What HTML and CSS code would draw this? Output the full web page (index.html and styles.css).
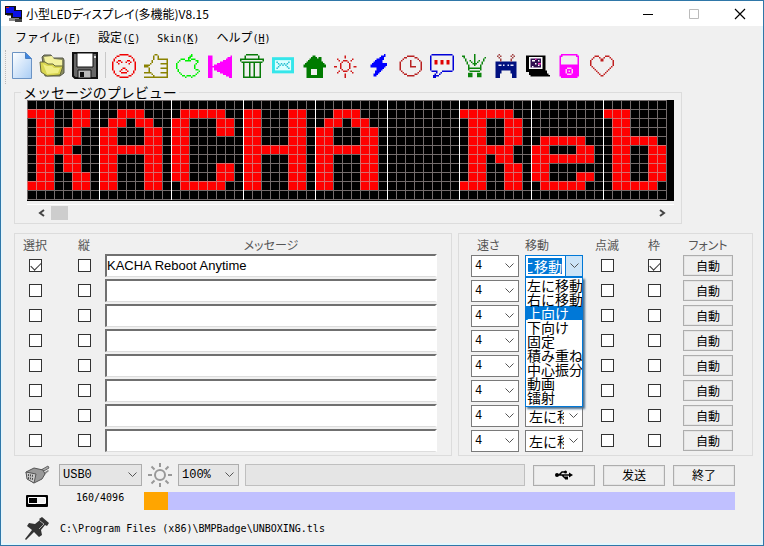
FILE: index.html
```html
<!DOCTYPE html>
<html lang="ja">
<head>
<meta charset="utf-8">
<title>小型LEDディスプレイ(多機能)V8.15</title>
<link rel="stylesheet" href="styles.css">
</head>
<body>
<div class="window">
  <header class="titlebar">
    <svg class="app-icon" width="17" height="17" viewBox="0 0 17 17"><path fill="#111" d="M0 1h11v9H0zM6 5h11v9H6z"/><path fill="#0a10e8" d="M1 2h8v6H1zM8 6h8v6H8z"/><path fill="#d22" d="M1 2h3v1H1z"/><path fill="#888" d="M2 10h4v1H2zM4 13h10v3H4z"/><path fill="#444" d="M10 14h7v3h-7z"/></svg>
    <h1>小型LEDディスプレイ(多機能)V8.15</h1>
    <div class="window-buttons">
      <button type="button" aria-label="最小化"><svg width="12" height="12"><path d="M1 6.5h10" stroke="#000"/></svg></button>
      <button type="button" aria-label="最大化" disabled><svg width="12" height="12"><path d="M1.5 1.500h9v9h-9z" fill="none" stroke="#bbb"/></svg></button>
      <button type="button" aria-label="閉じる"><svg width="12" height="12"><path d="M1 1l10 10M11 1L1 11" stroke="#000" stroke-width="1.200"/></svg></button>
    </div>
  </header>

  <nav class="menu">
    <a href="#">ファイル<span class="half">(<u>F</u>)</span></a>
    <a href="#">設定<span class="half">(<u>C</u>)</span></a>
    <a href="#"><span class="half">Skin(<u>K</u>)</span></a>
    <a href="#">ヘルプ<span class="half">(<u>H</u>)</span></a>
  </nav>

  <div class="toolbar">
    <div class="tools files">
      <button type="button" aria-label="新規"><svg width="20" height="28" viewBox="0 0 20 28"><defs><linearGradient id="sheet" x1="0" y1="0" x2="1" y2="1"><stop offset="0" stop-color="#fff"/><stop offset="1" stop-color="#a9cdf5"/></linearGradient></defs><path d="M.5.5h13l6 6v20H.5z" fill="url(#sheet)" stroke="#6b93c4"/><path d="M13.500.5v6h6" fill="#3f86e0" stroke="#4a7fc0"/></svg></button>
      <button type="button" aria-label="開く"><svg width="26" height="28" viewBox="0 0 26 28"><path d="M3 5l2-2h7l2 3h10l1 2v13l-4 3H6z" fill="#8a8c60" stroke="#55564a"/><path d="M5 5l8-1 2 3 8 1v11H8z" fill="#f4f2a0"/><path d="M1 10h5l3 2h5l2 2h8l-3 9-13 1-6-4z" fill="#d8d550" stroke="#66683a"/><path d="M4 12l4 2h5l2 2h6l-2 5-11 1z" fill="#f0ee85"/></svg></button>
      <button type="button" aria-label="保存"><svg width="26" height="28" viewBox="0 0 26 28"><path d="M1 1h24v25H3l-2-2z" fill="#666" stroke="#111" stroke-width="2"/><path d="M5 1h16v14H5z" fill="#fff" stroke="#111"/><path d="M6 18h13v8H6z" fill="#bbb" stroke="#111"/><path d="M8 20h4v5H8z" fill="#111"/><path d="M22 4h2v2h-2z" fill="#ddd"/></svg></button>
    </div>
    <div class="tools stamps">
      <button type="button" aria-label="顔"><svg width="24" height="24" viewBox="0 0 16 16" stroke="#f00000"><path d="M5 .5h6M3 1.500h2m6 0h2M2 2.500h1m10 0h1M1 3.500h1m12 0h1M1 4.500h1m12 0h1M0 5.500h1m14 0h1M0 6.500h1m14 0h1M0 7.500h1m14 0h1M0 8.500h1m14 0h1M0 9.500h1m14 0h1M0 10.500h1m14 0h1M1 11.500h1m12 0h1M1 12.500h1m12 0h1M2 13.500h1m10 0h1M3 14.500h2m6 0h2M5 15.500h6M4 4.500h2m4 0h2M3 5.500h1m2 0h1m2 0h1m2 0h1M4 6.500h1m6 0h1M7 9.500h2M6 10.500h1m2 0h1M5 11.500h1m4 0h1M6 12.500h4"/></svg></button>
      <button type="button" aria-label="いいね"><svg width="24" height="24" viewBox="0 0 16 16" stroke="#8a8200"><path d="M7 .5h2M6 1.500h1m2 0h1M6 2.500h1m2 0h1M6 3.500h1m2 0h7M5 4.500h1m9 0h1M5 5.500h1m9 0h1M4 6.500h1m6 0h5M0 7.500h4m11 0h1M0 8.500h3m12 0h1M3 9.500h1m7 0h5M3 10.500h1m11 0h1M3 11.500h1m11 0h1M0 12.500h5m6 0h5M5 13.500h1m9 0h1M6 14.500h1m8 0h1M0 15.500h16"/></svg></button>
      <button type="button" aria-label="りんご"><svg width="24" height="24" viewBox="0 0 16 16" stroke="#00f000"><path d="M10 .5h1M9 1.500h2M8 2.500h2M3 3.500h3m2 0h1m1 0h3M2 4.500h1m3 0h4m3 0h2M1 5.500h1m12 0h1M0 6.500h1m12 0h1M0 7.500h1m11 0h1M0 8.500h1m11 0h1M0 9.500h1m11 0h1M1 10.500h1m11 0h2M1 11.500h1m13 0h1M2 12.500h1m11 0h1M3 13.500h1m9 0h1M4 14.500h2m1 0h3m1 0h2M6 15.500h1m3 0h1"/></svg></button>
      <button type="button" aria-label="先頭へ"><svg width="24" height="24" viewBox="0 0 16 16" fill="#f0f"><path d="M0 1h3v15H0zM16 1v15h-2v-1h-2v-1h-2v-1H8v-1H6v-1H4V9H3V8h1V7h2V6h2V5h2V4h2V3h1V2h2V1z"/></svg></button>
      <button type="button" aria-label="ごみ箱"><svg width="24" height="24" viewBox="0 0 16 16" stroke="#087a08"><path d="M4 .5h8M3 1.500h1m8 0h1M3 2.500h1m8 0h1M0 3.500h16M0 4.500h1m14 0h1M1 5.500h14M2 15.500h12M2.500 5v10M6.500 6v9M9.500 6v9M13.500 5v10"/></svg></button>
      <button type="button" aria-label="メール"><svg width="22" height="24" viewBox="0 0 15 16"><path d="M0 2h15v11H0z" fill="#35e6ea"/><path d="M2 4h11v7H2z" fill="#dff"/><path d="M3 5.500h1m7 0h1M4 6.500h1m1 0h1m1 0h1m1 0h1M5 7.500h1m1 0h1m1 0h1M4 8.500h1m5 0h1M3 9.500h1m7 0h1" stroke="#25bfd0"/></svg></button>
      <button type="button" aria-label="ホーム"><svg width="24" height="24" viewBox="0 0 16 16" fill="#007b00"><path d="M7 1h2v1h1v1h1V2h2v3h1v1h1v1h1v2h-2v7H3V9H1V7h1V6h1V5h1V4h1V3h1V2h1z"/><path d="M6 10h4v4H6z" fill="#f0f0f0"/></svg></button>
      <button type="button" aria-label="太陽"><svg width="24" height="24" viewBox="0 0 16 16" stroke="#d01818"><path d="M7.500 1v2M2 3.500h1m9 0h1M3 4.500h1m2 0h3m2 0h1M5 5.500h1m3 0h1M4 6.500h1m5 0h1M4 7.500h1m5 0h1M0 8.500h2m2 0h1m5 0h1m2 0h2M4 9.500h1m5 0h1M5 10.500h1m3 0h1M3 11.500h1m2 0h3m2 0h1M2 12.500h1m9 0h1M7.500 13v3"/></svg></button>
      <button type="button" aria-label="稲妻"><svg width="24" height="24" viewBox="0 0 16 16" fill="#00f"><path d="M13 0v2h-1v2h-1v2h3v2h-1v1h-1v1h-1v1h-1v1H9v1H8v1H7v1H5v-2h1v-2h1V9H3V7h1V6h1V5h1V4h1V3h2V2h1V1h2V0z"/></svg></button>
      <button type="button" aria-label="時計"><svg width="24" height="24" viewBox="0 0 16 16" stroke="#b82020"><path d="M6 1.500h5M4 2.500h2m5 0h2M3 3.500h1m9 0h1M2 4.500h1m11 0h1M1 5.500h1m13 0h1M1 6.500h1m13 0h1M1 7.500h1m13 0h1M1 8.500h1m13 0h1M1 9.500h1m13 0h1M1 10.500h1m13 0h1M2 11.500h1m11 0h1M3 12.500h1m9 0h1M4 13.500h2m5 0h2M6 14.500h5M8.500 4v5M9 8.500h3"/></svg></button>
      <button type="button" aria-label="吹き出し"><svg width="24" height="24" viewBox="0 0 16 16" stroke="#0000d8"><path d="M1 .5h14M1 11.500h4m3 0h7M.5 1v10M15.500 1v10M4 12.500h1m2 0h1M3 13.500h1m2 0h1M2 14.500h4M2 15.500h2"/><path d="M3 4h2v3H3zM7 4h2v3H7zM11 4h2v3h-2z" fill="#e00000" stroke="none"/></svg></button>
      <button type="button" aria-label="カート"><svg width="24" height="24" viewBox="0 0 16 16" stroke="#0c840c"><path d="M8 .5h1M0 1.500h2M8 1.500h1M1 2.500h1m6 0h1m6 0h1M2 3.500h1m5 0h1m5 0h1M2 4.500h1m2 0h1m2 0h1m2 0h1m2 0h1M3 5.500h1m2 0h1m1 0h1m1 0h1m2 0h1M3 6.500h1m3 0h3m3 0h1M4 7.500h1m3 0h1m3 0h1M4 8.500h1m7 0h1M4 9.500h9M4 10.500h1m7 0h1M5 11.500h7"/><path d="M4 14h3m3 0h3" stroke-width="3"/></svg></button>
      <button type="button" aria-label="城"><svg width="24" height="24" viewBox="0 0 16 16"><path d="M1 5h14v11h-3v-3h-1v-2H5v2H4v3H1z" fill="#001080"/><path d="M3 7.500h2m1 0h1m2 0h1m1 0h2" stroke="#e8e8ff"/><path d="M3 .5h1m8 0h1M2 1.500h1m1 0h1m6 0h1m1 0h1M3 2.500h1m8 0h1M4 3.500h1m6 0h1M4 4.500h1m6 0h1" stroke="#a04040"/></svg></button>
      <button type="button" aria-label="パソコン"><svg width="24" height="24" viewBox="0 0 16 16"><path d="M0 1h13v10h1v2h1v1h1v1H3v-1H2v-2H0z"/><path d="M2 2h9v8H2z" fill="#fff"/><path d="M3 3h7v6H3z" fill="#301050"/><path d="M4 4.500h2m2 0h1M6 6.500h1M4 8.500h1m3-1h1" stroke="#fff"/><path d="M6 3.500h1M8 6.500h2" stroke="#e3b"/></svg></button>
      <button type="button" aria-label="プレーヤー"><svg width="24" height="24" viewBox="0 0 16 16"><path d="M2 0h11v1h1v14h-1v1H2v-1H1V1h1z" fill="#f0f"/><path d="M3 1h9v1h1v5H2V2h1z" fill="#f0f0f0"/><path d="M6 9.500h3M5 10.500h1m3 0h1M5 11.500h1m1 0h1m1 0h1M5 12.500h1m3 0h1M6 13.500h3" stroke="#fce"/></svg></button>
      <button type="button" aria-label="ハート"><svg width="24" height="24" viewBox="0 0 16 16" stroke="#c02020"><path d="M3 1.500h3m4 0h3M2 2.500h1m3 0h1m2 0h1m3 0h1M1 3.500h1m5 0h2m5 0h1M0 4.500h1m6 0h2m6 0h1M0 5.500h1m14 0h1M0 6.500h1m14 0h1M0 7.500h1m14 0h1M1 8.500h1m12 0h1M2 9.500h1m10 0h1M3 10.500h1m8 0h1M4 11.500h1m6 0h1M5 12.500h1m4 0h1M6 13.500h1m2 0h1M7 14.500h2"/></svg></button>
    </div>
  </div>

  <main>
    <fieldset class="preview">
      <legend>メッセージのプレビュー</legend>
      <svg class="led" viewBox="0 0 647 101" role="img" aria-label="KACHA Reb">
        <defs>
          <pattern id="cell" width="9" height="9" patternUnits="userSpaceOnUse"><path d="M0 .5h9M.5 0v9" stroke="#c0b4b4" stroke-opacity=".6"/></pattern>
          <pattern id="block" width="72" height="9" patternUnits="userSpaceOnUse"><path d="M.5 0v9" stroke="#fff"/></pattern>
          <path id="led-a" d="M2 1.500h3M1 2.500h2m1 0h2M0 3.500h2m3 0h2M0 4.500h2m3 0h2M0 5.500h7M0 6.500h2m3 0h2M0 7.500h2m3 0h2M0 8.500h2m3 0h2M0 9.500h2m3 0h2"/>
        </defs>
        <rect width="647" height="101"/>
        <g transform="scale(9)" stroke="#f00">
          <path d="M0 1.500h3m2 0h2M1 2.500h2m2 0h2M1 3.500h2m1 0h2M1 4.500h2m1 0h2M1 5.500h4M1 6.500h2m1 0h2M1 7.500h2m1 0h2M1 8.500h2m2 0h2M0 9.500h3m2 0h2"/>
          <use href="#led-a" x="8"/>
          <path d="M17 1.500h5M16 2.500h2m3 0h2M16 3.500h2m3 0h2M16 4.500h2M16 5.500h2M16 6.500h2M16 7.500h2m3 0h2M16 8.500h2m3 0h2M17 9.500h5"/>
          <path d="M25 1v9M30 1v9" stroke-width="2"/><path d="M26 5.500h3"/>
          <use href="#led-a" x="32"/>
          <path d="M48 1.500h6M49 2.500h2m2 0h2M49 3.500h2m2 0h2M49 4.500h2m2 0h2M49 5.500h5M49 6.500h2m1 0h2M49 7.500h2m2 0h2M49 8.500h2m2 0h2M48 9.500h3m2 0h2"/>
          <path d="M57 4.500h5M56 5.500h2m3 0h2M56 6.500h7M56 7.500h2M56 8.500h2m3 0h2M57 9.500h5"/>
          <path d="M64 1.500h3M65 2.500h2M65 3.500h2M65 4.500h5M65 5.500h2m2 0h2M65 6.500h2m2 0h2M65 7.500h2m2 0h2M65 8.500h2m2 0h2M65 9.500h5"/>
        </g>
        <rect width="640" height="100" fill="url(#cell)"/>
        <rect x="1" width="639" height="100" fill="url(#block)"/>
      </svg>
      <div class="scrollbar">
        <button type="button" aria-label="左へ"><svg width="8" height="8"><path d="M6 1L2 4l4 3" fill="none" stroke="#444" stroke-width="2"/></svg></button>
        <div class="thumb"></div>
        <button type="button" class="forward" aria-label="右へ"><svg width="8" height="8"><path d="M2 1l4 3-4 3" fill="none" stroke="#444" stroke-width="2"/></svg></button>
      </div>
    </fieldset>

    <div class="panels">
      <section class="panel messages" id="messages">
        <div class="row head"><span class="pick">選択</span><span class="pick tall">縦</span><span class="text">メッセージ</span></div>
      </section>
      <section class="panel effects" id="effects">
        <div class="row head"><span class="speed">速さ</span><span class="move">移動</span><span>点滅</span><span>枠</span><span>フォント</span></div>
      </section>
    </div>
  </main>

  <footer>
    <div class="controls">
      <svg class="glyph" width="26" height="22" viewBox="0 0 26 22"><path d="M17 6l7-4 1 2-7 4z" fill="#aaa" stroke="#666"/><path d="M18 10l6-4 1 1-6 5z" fill="#888"/><path d="M2 8l8-4 9 2 2 4-3 5-8 4-6-4z" fill="#999" stroke="#555"/><path d="M2 8l10 2-2 9-7-4z" fill="#ccc" stroke="#555"/><path d="M4 11l6 1M4 14l5 1" stroke="#444" stroke-dasharray="1 1" stroke-width="2"/></svg>
      <select class="box port" aria-label="ポート"><option>USB0</option></select>
      <svg class="glyph" width="24" height="24" viewBox="0 0 24 24" fill="none" stroke="#999" stroke-width="2"><circle cx="12" cy="12" r="5"/><path d="M12 0v4M12 20v4M0 12h4M20 12h4M3.500 3.500l3 3M17.500 17.500l3 3M3.500 20.500l3-3M17.500 6.500l3-3"/></svg>
      <select class="box bright" aria-label="明るさ"><option>100%</option></select>
      <input class="status" type="text" aria-label="状態" disabled>
      <div class="actions">
        <button type="button" class="push" aria-label="USB"><svg width="18" height="10" viewBox="0 0 18 10"><path d="M2 5h13M4 5l3-3h3M7 5l3 3h2" fill="none" stroke="#000" stroke-width="1.500"/><circle cx="2" cy="5" r="2"/><circle cx="10.500" cy="2" r="1.500"/><path d="M10 6.500h3v3h-3zM14 2.500L18 5l-4 2.500z"/></svg></button>
        <button type="button" class="push">发送</button>
        <button type="button" class="push">終了</button>
      </div>
    </div>
    <div class="usage">
      <svg class="glyph" width="26" height="14" viewBox="0 0 26 14"><rect x="2" y="1" width="22" height="12" rx="1"/><path d="M4.500 3.500h17v6h-17z" fill="none" stroke="#fff"/><path d="M13 4h8v5h-8z" fill="#f0f0f0"/></svg>
      <span class="half count">160/4096</span>
      <div class="meter"><div class="used" style="width:4%"></div></div>
    </div>
    <div class="path">
      <svg class="glyph" width="26" height="26" viewBox="0 0 26 26"><path d="M15 3l3-2 7 6-2 3-2-1-4 5 1 5-3 2-5-5-8 8-1-1 7-9-5-4 2-3 6 1 5-4z" fill="#333"/><path d="M16 5l4 3-5 5" fill="none" stroke="#aaa"/></svg>
      <span class="half">C:\Program Files (x86)\BMPBadge\UNBOXING.tls</span>
    </div>
  </footer>
</div>
<script src="app.js"></script>
</body>
</html>
```

FILE: styles.css
```css
* { box-sizing: border-box; }

body {
  margin: 0;
  font: 12px/16px "Noto Sans CJK JP", sans-serif;
  color: #000;
  background: #f0f0f0;
}

button, input, select { font: inherit; color: inherit; margin: 0; padding: 0; border-radius: 0; }

.window {
  min-height: 100vh;
  background: #f0f0f0;
  border: 1px solid #2f77a8;
  box-shadow: inset 0 -2px #e2f7fd, inset 2px 0 #e6f4fa, inset -2px 0 #e6f4fa;
}

.half { font: 10px/16px "DejaVu Sans Mono", monospace; }

.titlebar { display: flex; align-items: center; height: 25px; padding-left: 4px; background: #fff; }
.titlebar h1 { margin: 0 0 0 4px; font-size: 12px; font-weight: 400; font-feature-settings: "palt"; white-space: nowrap; }
.window-buttons { display: flex; margin-left: auto; }
.window-buttons button { width: 46px; height: 24px; border: 0; background: none; display: grid; place-items: center; }

.menu { display: flex; gap: 17px; height: 24px; align-items: center; padding-left: 14px; }
.menu a { color: inherit; text-decoration: none; white-space: nowrap; }

.toolbar { display: flex; height: 34px; margin-left: 4px; padding: 2px 0 0 6px; border-left: 1px dotted #bbb; }
.tools { display: flex; align-items: flex-start; gap: 8px; }
.tools button { border: 0; background: none; display: block; }
.tools svg { display: block; }
.files { gap: 7px; padding-right: 7px; }
.stamps { height: 26px; padding: 2px 0 0 6px; border-left: 1px solid #c8c8c8; }

main { padding: 0 10px 0 13px; }

.preview { margin: 0 71px 0 0; padding: 0 7px 2px 12px; border: 1px solid #dcdcdc; min-width: 0; }
.preview legend { padding: 0 2px; margin-left: -6px; font-size: 14px; line-height: 16px; }
.led { display: block; width: 100%; shape-rendering: crispEdges; }
.scrollbar { display: flex; align-items: center; height: 17px; margin-top: 3px; border-top: 1px solid #fff; padding: 0 5px 0 8px; }
.scrollbar button { display: grid; place-items: center; width: 14px; height: 14px; border: 0; background: none; }
.thumb { width: 17px; height: 14px; background: #cdcdcd; margin-left: 2px; }
.forward { margin-left: auto; }

.panels { display: flex; gap: 6px; margin-top: 9px; }
.panel { border: 1px solid #dcdcdc; padding-bottom: 2px; }
.messages { flex: 1; padding-left: 7px; padding-right: 14px; }
.effects { padding-left: 12px; padding-right: 19px; }

.row { display: flex; align-items: center; height: 25px; }
.head { height: 19px; padding-top: 2px; color: #555; font-feature-settings: "palt"; }
.pick { width: 26px; margin-right: 23px; display: grid; justify-items: center; }
.tall { margin-right: 8px; }
.messages .text { flex: 1; min-width: 0; text-align: center; }

.messages input[type="text"] {
  height: 23px;
  padding: 0 0 1px 0;
  border: 2px solid #fff;
  border-top-color: #707070;
  border-left-color: #707070;
  border-bottom: 1px solid #ddd;
  background: #fff;
  text-align: left;
  font: 13px/18px "Liberation Sans", sans-serif;
}

.effects .row { display: grid; grid-template-columns: 48px 58px 36px 46px 50px; column-gap: 6px; justify-items: center; }
.effects .head .speed, .effects .head .move { justify-self: start; }
.effects .head .speed { padding-left: 6px; }

input[type="checkbox"] { appearance: none; display: block; width: 13px; height: 13px; border: 1px solid #333; background: #fff; }
input[type="checkbox"]:checked::before {
  content: "";
  display: block;
  width: 9px;
  height: 5px;
  margin: 2px 0 0 1px;
  border-left: 1px solid #333;
  border-bottom: 1px solid #333;
  transform: rotate(-45deg);
}

select {
  appearance: none;
  width: 100%;
  height: 22px;
  padding: 0 18px 0 3px;
  border: 1px solid #7a7a7a;
  background: #fff url("data:image/svg+xml,%3Csvg xmlns='http://www.w3.org/2000/svg' width='9' height='6'%3E%3Cpath d='M.5 .5l4 4 4-4' fill='none' stroke='%23555'/%3E%3C/svg%3E") no-repeat right 4px center;
}
select.value-speed { font: 12px/18px "Liberation Mono", monospace; }
select.value-move { font-size: 14px; line-height: 18px; text-overflow: clip; }

.combo { position: relative; display: flex; width: 100%; height: 22px; padding: 2px 0 2px 2px; border: 1px solid #0078d7; background: #fff; }
.combo input { flex: 1; min-width: 0; height: 16px; margin-right: 3px; border: 0; background: #0078d7; color: #fff; font-size: 14px; line-height: 16px; direction: rtl; }
.combo button { width: 17px; margin: -2px 0; border: 0; border-left: 1px solid #0078d7; background: #cce4f7; display: grid; place-items: center; }
.list {
  position: absolute;
  z-index: 1;
  top: 21px;
  left: -1px;
  width: 58px;
  margin: 0;
  padding: 0 0 2px;
  list-style: none;
  overflow: hidden;
  border: 1px solid #0078d7;
  background: #fff;
  box-shadow: 2px 2px 2px #4a6f8f;
  font-size: 14px;
  line-height: 14px;
  white-space: nowrap;
}
.list li { padding-left: 1px; }
.list .current { background: #0078d7; color: #fff; }

.push { height: 21px; border: 1px solid #adadad; background: #efefef; line-height: 16px; display: grid; place-items: center; box-shadow: inset 0 0 0 1px #e4e4e4; }
.effects .push { width: 50px; }

footer { padding: 8px 28px 0 23px; }
footer .glyph { flex: none; }
.controls { display: flex; align-items: center; gap: 6px; height: 22px; }
.box { flex: none; background-color: #e5e5e5; border-color: #adadad; font: 12px/18px "Liberation Mono", monospace; }
.controls .port { width: 83px; margin-left: 3px; }
.controls .bright { width: 61px; }
.status { flex: 1; min-width: 0; height: 22px; border: 1px solid #bfbfbf; background: #e5e5e5; }
.actions { display: flex; gap: 8px; margin-left: 2px; }
.actions .push { width: 62px; }

.usage { display: flex; align-items: center; height: 18px; margin-top: 6px; }
.count { width: 94px; padding-left: 26px; line-height: 12px; align-self: flex-start; }
.meter { flex: 1; height: 18px; background: #c0c0ff; }
.used { height: 100%; background: #ffa500; }

.path { display: flex; align-items: center; gap: 10px; height: 26px; margin-top: 6px; white-space: nowrap; }
```

FILE: app.js
```js
const moves = ["左に移動", "右に移動", "上向け", "下向け", "固定", "積み重ね", "中心振分", "動画", "镭射"];
const messages = document.getElementById("messages");
const effects = document.getElementById("effects");

function addRow(parent, html) {
  const row = document.createElement("div");
  row.className = "row";
  row.innerHTML = html;
  parent.append(row);
}

const combo = `<div class="combo">
  <input type="text" aria-label="移動 1" value="左に移動">
  <button type="button" aria-label="一覧"><svg width="9" height="6"><path d="M.5 .5l4 4 4-4" fill="none" stroke="#555"/></svg></button>
  <ul class="list">${moves.map((m, i) => `<li${i === 2 ? ' class="current"' : ""}>${m}</li>`).join("")}</ul>
</div>`;

for (let n = 1; n <= 8; n++) {
  const on = n === 1 ? "checked" : "";
  addRow(messages, `
    <span class="pick"><input type="checkbox" aria-label="選択 ${n}" ${on}></span>
    <span class="pick tall"><input type="checkbox" aria-label="縦 ${n}"></span>
    <input class="text" type="text" aria-label="メッセージ ${n}" value="${n === 1 ? "KACHA Reboot Anytime" : ""}">`);
  addRow(effects, `
    <select class="value-speed" aria-label="速さ ${n}"><option>4</option></select>
    ${n === 1 ? combo : `<select class="value-move" aria-label="移動 ${n}">${moves.map(m => `<option>${m}</option>`).join("")}</select>`}
    <input type="checkbox" aria-label="点滅 ${n}">
    <input type="checkbox" aria-label="枠 ${n}" ${on}>
    <button type="button" class="push">自動</button>`);
}
```
